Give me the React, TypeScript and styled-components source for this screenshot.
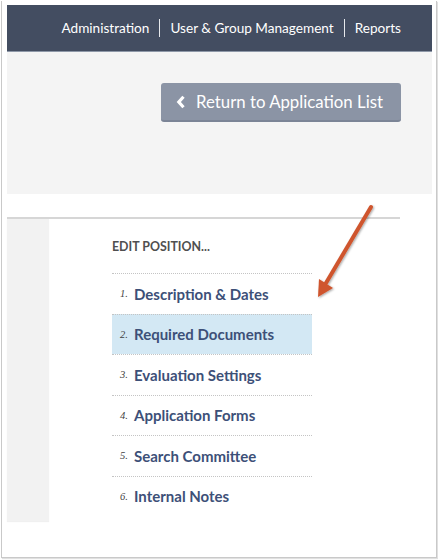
import React from 'react'
import styled, { createGlobalStyle } from 'styled-components'

const GlobalStyle = createGlobalStyle`
  html, body {
    margin: 0;
    padding: 0;
    background: #ffffff;
  }
  * {
    box-sizing: border-box;
  }
`

const Frame = styled.div`
  position: relative;
  width: 438px;
  height: 560px;
  padding: 1px 1px 2px 1px;
  background: #ffffff;
  font-family: Lato, 'Open Sans', sans-serif;
`

const Shell = styled.div`
  height: 100%;
  padding: 4px 4px 0 5px;
  border: 1px solid #c9c9c9;
  border-top: none;
  box-shadow: 1px 1px 1px rgba(0, 0, 0, 0.12);
`

const Header = styled.header`
  display: flex;
  justify-content: flex-end;
  align-items: center;
  height: 47px;
  padding-right: 31px;
  background: #434d61;
  border-bottom: 1px solid #8e98a8;
`

const NavItem = styled.a<{ $divider?: boolean }>`
  color: #ffffff;
  font-size: 13.6px;
  line-height: 18px;
  text-decoration: none;
  padding: 0 10px;
  border-left: ${({ $divider }) => ($divider ? '1px solid #e6e8ec' : 'none')};
  &:last-child {
    padding-right: 0;
  }
`

const Hero = styled.section`
  display: flex;
  justify-content: flex-end;
  align-items: flex-start;
  height: 142px;
  padding: 31px 31px 0 0;
  background: #f4f4f4;
`

const BackButton = styled.button`
  display: flex;
  align-items: center;
  gap: 10px;
  width: 240px;
  height: 39px;
  padding: 0 0 0 15px;
  border: none;
  border-bottom: 2px solid #7b8496;
  border-radius: 3px;
  background: #8b94a5;
  color: #ffffff;
  font-family: Lato, 'Open Sans', sans-serif;
  font-size: 16.8px;
  cursor: pointer;
`

const Panel = styled.div`
  display: flex;
  width: 393px;
  margin-top: 23px;
  border-top: 2px solid #d6d6d6;
`

const Sidebar = styled.aside`
  width: 42px;
  height: 302px;
  background: #f2f2f2;
  box-shadow: 0 1px 1px rgba(0, 0, 0, 0.06);
`

const Main = styled.div`
  padding: 20px 0 0 63px;
`

const Title = styled.h2`
  margin: 0 0 18px;
  color: #4f4f4f;
  font-size: 12.4px;
  line-height: 16px;
  font-weight: 700;
  text-transform: uppercase;
`

const StepList = styled.ol`
  width: 200px;
  margin: 0;
  padding: 0;
  list-style: none;
`

const Step = styled.li<{ $active?: boolean }>`
  display: flex;
  align-items: center;
  height: 40.5px;
  padding-left: 8px;
  border-top: 1px dotted #c4c4c4;
  background: ${({ $active }) => ($active ? '#d3e8f4' : 'transparent')};
`

const StepNumber = styled.span`
  width: 14px;
  color: #3f3f3f;
  font-family: 'Liberation Serif', serif;
  font-style: italic;
  font-size: 10.5px;
`

const StepLabel = styled.a`
  color: #3d5078;
  font-size: 15px;
  font-weight: 700;
  text-decoration: none;
`

const Annotation = styled.svg`
  position: absolute;
  left: 0;
  top: 0;
  pointer-events: none;
`

const steps = [
  'Description & Dates',
  'Required Documents',
  'Evaluation Settings',
  'Application Forms',
  'Search Committee',
  'Internal Notes',
]

const App = () => {
  return (
    <Frame>
      <GlobalStyle />
      <Shell>
        <Header>
          <NavItem>Administration</NavItem>
          <NavItem $divider>User &amp; Group Management</NavItem>
          <NavItem $divider>Reports</NavItem>
        </Header>

        <Hero>
          <BackButton>
            <svg width="10" height="14" viewBox="0 0 10 14">
              <polyline points="7.5,1.8 2.8,7 7.5,12.2" fill="none" stroke="#fff" strokeWidth="3.2" strokeLinejoin="miter" />
            </svg>
            <span>Return to Application List</span>
          </BackButton>
        </Hero>

        <Panel>
          <Sidebar />
          <Main>
            <Title>Edit Position...</Title>
            <StepList>
              {steps.map((label, i) => (
                <Step key={label} $active={i === 1}>
                  <StepNumber>{i + 1}.</StepNumber>
                  <StepLabel>{label}</StepLabel>
                </Step>
              ))}
            </StepList>
          </Main>
        </Panel>
      </Shell>

      {/* callout arrow */}
      <Annotation width="438" height="560" viewBox="0 0 438 560">
        <defs>
          <filter id="arrowShadow" x="-20%" y="-20%" width="140%" height="140%">
            <feDropShadow dx="1" dy="1" stdDeviation="1" floodColor="#000" floodOpacity="0.35" />
          </filter>
        </defs>
        <g filter="url(#arrowShadow)">
          <line x1="371" y1="207" x2="326" y2="283" stroke="#cf552d" strokeWidth="4" strokeLinecap="round" />
          <polygon points="318,297 333,288 319,279" fill="#cf552d" />
        </g>
      </Annotation>
    </Frame>
  )
}

export default App
